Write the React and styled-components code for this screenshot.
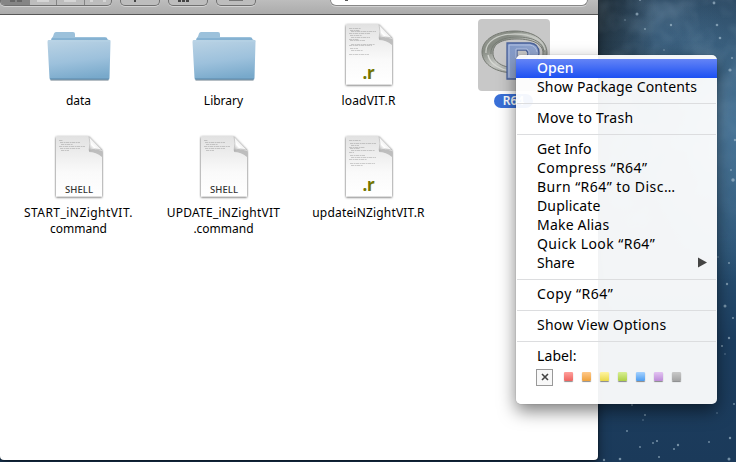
import React from "react";
import styled, { createGlobalStyle } from "styled-components";

const Global = createGlobalStyle`
  * { box-sizing: border-box; }
  html, body { margin: 0; width: 736px; height: 462px; overflow: hidden; }
  body { font-family: "Noto Sans", "Open Sans", sans-serif; color: #000; }
`;

const Desktop = styled.main`
  position: relative;
  width: 736px;
  height: 462px;
  overflow: hidden;
  background:
    radial-gradient(ellipse 60px 150px at 598px 0, rgba(32, 42, 48, 0.8), transparent),
    radial-gradient(ellipse 80px 150px at 725px 130px, rgba(84, 130, 166, 0.75), transparent),
    radial-gradient(ellipse 60px 50px at 665px 35px, rgba(68, 106, 138, 0.6), transparent),
    linear-gradient(#2a465f 0, #2f5878 120px, #2a5274 250px, #1c3e60 340px, #1b3a5a 462px);
`;

const Stars = styled.svg`
  position: absolute;
  inset: 0;
`;

const Window = styled.section`
  position: relative;
  width: 598px;
  height: 460px;
  background: #fff;
  border-radius: 0 0 4px 4px;
  box-shadow: 0 0 2px rgba(0, 0, 0, 0.8), 0 4px 12px rgba(0, 0, 0, 0.5);
`;

const Toolbar = styled.header`
  display: flex;
  align-items: flex-start;
  height: 15px;
  background: linear-gradient(#bdbdbd, #ababab);
  border-bottom: 1px solid #575757;
`;

const ViewSwitch = styled.div`
  display: flex;
  width: 112px;
  height: 6px;
  overflow: hidden;
  border: 1px solid #707070;
  border-top: 0;
  border-radius: 0 0 5px 5px;
  box-shadow: 0 1px 0 #d2d2d2;
  background: #bdbdbd;
`;

const ViewButton = styled.span`
  display: flex;
  justify-content: center;
  flex: ${(p) => (p.$active ? "0 0 29px" : "1")};
  background: ${(p) => (p.$active ? "#858585" : "transparent")};
  border-left: ${(p) => (p.$divided ? "1px solid #858585" : "0")};
`;

const ToolButton = styled.span`
  display: flex;
  justify-content: center;
  width: 40px;
  height: 6px;
  margin-left: 8px;
  border: 1px solid #707070;
  border-top: 0;
  border-radius: 0 0 5px 5px;
  box-shadow: 0 1px 0 #d2d2d2;
  background: #bdbdbd;
`;

const SearchField = styled.div`
  width: 258px;
  height: 6px;
  margin-left: 74px;
  padding-left: 14px;
  border: 1px solid #888;
  border-top: 0;
  border-radius: 0 0 9px 9px;
  box-shadow: 0 1px 0 #d2d2d2;
  background: #fff;
`;

const Glyph = styled.svg`
  display: block;
  flex: none;
`;

const Files = styled.div`
  display: grid;
  grid-template-columns: repeat(4, 145px);
  grid-auto-rows: 112px;
  padding: 4px 0 0 6px;
`;

const FileCell = styled.article`
  display: flex;
  flex-direction: column;
  align-items: center;
`;

const IconWell = styled.div`
  width: 72px;
  height: 72px;
  border-radius: 4px;
  background: ${(p) => (p.$selected ? "#c8c8c8" : "transparent")};
`;

const FileName = styled.div`
  display: flex;
  flex-direction: column;
  align-items: center;
  margin-top: ${(p) => (p.$selected ? 3 : 2)}px;
  padding: 0 9px;
  border-radius: 8px;
  font-size: 12px;
  line-height: ${(p) => (p.$selected ? 14 : 16)}px;
  font-weight: ${(p) => (p.$selected ? 600 : 400)};
  color: ${(p) => (p.$selected ? "#fff" : "#000")};
  background: ${(p) => (p.$selected ? "#3a70d8" : "transparent")};
`;

const NameLine = styled.span`
  letter-spacing: ${(p) => p.$track || 0}px;
  white-space: nowrap;
`;

const Menu = styled.nav`
  position: absolute;
  left: 516px;
  top: 55px;
  width: 201px;
  height: 349px;
  padding: 4px 0 0;
  border-radius: 5px;
  background: rgba(255, 255, 255, 0.945);
  box-shadow: 0 0 1px rgba(0, 0, 0, 0.45), 0 7px 17px rgba(0, 0, 0, 0.5);
`;

const MenuItem = styled.div`
  display: flex;
  align-items: center;
  justify-content: space-between;
  height: 19px;
  padding: 0 10px 2px 21px;
  font-size: 14px;
  line-height: 17px;
  white-space: nowrap;
  letter-spacing: ${(p) => p.$track || 0}px;
  color: ${(p) => (p.$active ? "#fff" : "#000")};
  font-weight: ${(p) => (p.$active ? 500 : 400)};
  background: ${(p) => (p.$active ? "linear-gradient(#6484f6, #1c50f2)" : "transparent")};
`;

const Separator = styled.hr`
  height: 1px;
  margin: 6px 1px 5px;
  border: 0;
  background: #dcdddf;
`;

const Swatches = styled.div`
  display: flex;
  align-items: center;
  height: 18px;
  margin-top: 2px;
  padding-left: 20px;
`;

const NoLabel = styled.span`
  display: grid;
  place-items: center;
  width: 17px;
  height: 17px;
  margin-right: 2px;
  border: 1px solid #999;
  background: #f8f8f8;
`;

const Swatch = styled.span`
  width: 9px;
  height: 9px;
  margin: -2px 0 0 9px;
  border-radius: 1px;
  background: linear-gradient(${(p) => p.$from}, ${(p) => p.$to});
  box-shadow: 0 1px 1px rgba(0, 0, 0, 0.45);
`;

function Folder() {
  return (
    <Glyph width="72" height="72" viewBox="0 0 72 72">
      <defs>
        <linearGradient id="folderFront" x1="0.2" y1="0" x2="0.4" y2="1">
          <stop offset="0" stopColor="#b9d2e4" />
          <stop offset="0.55" stopColor="#9dc1dc" />
          <stop offset="1" stopColor="#78a9cb" />
        </linearGradient>
      </defs>
      <path d="M8 24V20L10 17.500L11 14.500Q11.500 13 13 13H30Q32 13 32 15V18H62Q64 18 64.500 20L67 22V26H5V22Z" fill="#9cc1db" />
      <path d="M9 20H64" stroke="#6fa2c8" />
      <path d="M5.500 21H66.500Q68 21 67.500 23L66.500 59Q66.500 61 65 61H8Q6.500 61 6.500 59L4.500 23Q4.500 21 5.500 21Z" fill="url(#folderFront)" />
      <path d="M7 59.500H66" stroke="#6b9abc" />
      <path d="M7.500 61H65.500" stroke="#6d7f8c" strokeWidth="1" />
      <path d="M6 22H67" stroke="#b9d7e9" strokeWidth="0.600" />
    </Glyph>
  );
}

const CODE = [[0, 12], [2, 10], [3, 25], [5, 21], [7, 12], [9, 19], [11, 10], [12, 15], [16, 24], [17, 23], [20, 8], [22, 12], [26, 20]];
const SCRIPT = [[0, 4], [2, 20], [4, 12], [6, 26], [8, 20], [10, 8]];
const UPDATE = [[0, 12], [3, 26], [5, 8], [7, 16], [8, 10], [10, 24], [12, 5], [15, 15], [17, 25], [19, 18], [23, 25], [25, 12]];

function Page({ kind, lines }) {
  const shell = kind === "SHELL";
  return (
    <Glyph width="72" height="72" viewBox="0 0 72 72">
      <defs>
        <linearGradient id="paper" x1="0" y1="0" x2="0" y2="1">
          <stop offset="0" stopColor="#e2e2e2" />
          <stop offset="0.600" stopColor="#fafafa" />
          <stop offset="1" stopColor="#fff" />
        </linearGradient>
        <linearGradient id="curl" x1="0" y1="1" x2="0.700" y2="0.300">
          <stop offset="0" stopColor="#a8a8a8" />
          <stop offset="0.450" stopColor="#fff" />
          <stop offset="1" stopColor="#e0e0e0" />
        </linearGradient>
        <filter id="drop" x="-20%" y="-20%" width="140%" height="140%">
          <feDropShadow dx="0" dy="0.700" stdDeviation="0.900" floodOpacity="0.75" />
        </filter>
      </defs>
      <path d="M13 5.500H46L59 19V65.500H13Z" fill="url(#paper)" filter="url(#drop)" />
      <path d="M46 19Q52 17 59 20V26Q53 21 46 21Z" fill="#aaa" opacity="0.700" />
      <path d="M46 5.500L59 19Q52 16.500 46 19.500Q48 12 46 5.500Z" fill="url(#curl)" stroke="#aaa" strokeWidth="0.500" />
      {lines.map(([y, w], i) => (
        <path key={i} d={`M${16 + (i % 3)} ${9.5 + y}h${w}`} stroke="#777" strokeWidth="0.600" strokeDasharray="3 .6 2 .4" opacity="0.550" />
      ))}
      {shell ? (
        <text x="36" y="62" textAnchor="middle" fontFamily="Noto Sans" fontSize="9.500" fontWeight="500" textLength="28" fill="#333">SHELL</text>
      ) : (
        <text x="35.500" y="60" textAnchor="middle" fontFamily="Noto Sans" fontSize="17" fontWeight="700" textLength="12" fill="#737500">.r</text>
      )}
    </Glyph>
  );
}

function RLogo() {
  return (
    <Glyph width="72" height="72" viewBox="0 0 72 72">
      <defs>
        <linearGradient id="ring" x1="0" y1="0" x2="1" y2="1">
          <stop offset="0" stopColor="#a4a69f" />
          <stop offset="0.250" stopColor="#858a82" />
          <stop offset="0.500" stopColor="#c5c7c3" />
          <stop offset="1" stopColor="#6c716b" />
        </linearGradient>
        <linearGradient id="letter" x1="0" y1="0" x2="1" y2="1">
          <stop offset="0" stopColor="#7e96c6" />
          <stop offset="1" stopColor="#a5b6da" />
        </linearGradient>
      </defs>
      <path fillRule="evenodd" d="M4 33C4 20 19 12 37 12S69 21 69 34S55 54 37 54S4 46 4 33ZM15 34C15 43 25 49 39 49S65 43 65 34S55 20 39 20S15 25 15 34Z" fill="url(#ring)" stroke="#757972" />
      <path d="M8 34C7 22 20 15 37 15S65 21 67 31" fill="none" stroke="#c9ccc6" strokeWidth="1.300" />
      <path d="M13 35C12 25 23 18 39 18S65 23 66 33" fill="none" stroke="#777c75" strokeWidth="1" />
      <path d="M10 36C12 45 22 51 34 52" fill="none" stroke="#d5d7d2" strokeWidth="1.300" />
      <path fillRule="evenodd" d="M29 24H52Q61 25 61 34Q61 41 54 43L63 60H52L44 45H39V60H29ZM39 31V38H48Q52 35 48 31Z" fill="url(#letter)" stroke="#4a629a" strokeWidth="1.300" />
      <path d="M31 58V26H52Q58 27 59 33M38 39V30H49Q52 32 51 37" fill="none" stroke="#b4c3e4" strokeWidth="1" />
    </Glyph>
  );
}

const FILES = [
  { icon: <Folder />, name: [["data"]] },
  { icon: <Folder />, name: [["Library"]] },
  { icon: <Page kind=".r" lines={CODE} />, name: [["loadVIT.R", 0.2]] },
  { icon: <RLogo />, name: [["R64"]], selected: true },
  { icon: <Page kind="SHELL" lines={SCRIPT} />, name: [["START_iNZightVIT.", 0.45], ["command"]] },
  { icon: <Page kind="SHELL" lines={SCRIPT} />, name: [["UPDATE_iNZightVIT", 0.25], [".command"]] },
  { icon: <Page kind=".r" lines={UPDATE} />, name: [["updateiNZightVIT.R", 0.18]] },
];

const MENU = [
  ["Open"], ["Show Package Contents", 0.15], null,
  ["Move to Trash", 0.3], null,
  ["Get Info", 0.15], ["Compress “R64”", 0.44], ["Burn “R64” to Disc…", 0.46], ["Duplicate", 0.15], ["Make Alias", 0.2], ["Quick Look “R64”", 0.44], ["Share"], null,
  ["Copy “R64”", 0.52], null,
  ["Show View Options", 0.23], null,
  ["Label:", 0.1],
];

const LABELS = [["#ffa09c", "#ee6460"], ["#ffc98a", "#efa13c"], ["#fff4a0", "#ead94a"], ["#d8ef94", "#aed045"], ["#a6d2ff", "#4e9df0"], ["#e3c3f2", "#bd8bd8"], ["#c9c9c9", "#a3a3a3"]];

const STARS = [
  [637, 14, 1.5], [640, 0, 1], [671, 25, 1.2], [714, 3, 1.4], [717, 25, 1.3], [720, 38, 1.3], [730, 70, 1.6], [732, 58, 1], [645, 29, 0.9], [625, 20, 0.7], [664, 50, 0.8],
  [735, 140, 1.2], [731, 170, 0.9], [733, 180, 1.7], [718, 257, 0.8], [729, 263, 1], [727, 284, 1.2], [725, 306, 1.5], [733, 318, 1],
  [729, 338, 1.2], [722, 346, 1], [725, 354, 0.7], [604, 460, 1.2], [620, 459, 1.3], [627, 431, 0.9], [632, 405, 0.9], [645, 415, 0.9], [643, 420, 0.7], [653, 443, 0.9], [657, 441, 1.1], [678, 445, 1.2], [674, 449, 1], [640, 447, 0.9], [659, 457, 1], [709, 442, 0.9], [730, 438, 1.2], [729, 459, 1.5], [717, 413, 0.7], [734, 404, 0.9],
];

export default function App() {
  return (
    <Desktop>
      <Global />
      <Stars width="736" height="462">
        <defs>
          <filter id="clouds" x="0" y="0" width="100%" height="100%">
            <feTurbulence type="fractalNoise" baseFrequency="0.03" numOctaves="3" seed="8" />
            <feColorMatrix values="0 0 0 0 .45  0 0 0 0 .62  0 0 0 0 .76  1.4 0 0 0 -.55" />
          </filter>
          <linearGradient id="cloudFade" x1="0" y1="0" x2="0" y2="1">
            <stop offset="0" stopColor="#fff" />
            <stop offset="0.450" stopColor="#aaa" />
            <stop offset="1" stopColor="#000" />
          </linearGradient>
          <mask id="cloudMask">
            <rect x="598" width="138" height="260" fill="url(#cloudFade)" />
          </mask>
        </defs>
        <g mask="url(#cloudMask)">
          <rect x="598" width="138" height="260" filter="url(#clouds)" opacity="0.350" />
        </g>
        {STARS.map(([x, y, r], i) => <circle key={i} cx={x} cy={y} r={r} fill="#b3cad9" opacity="0.600" />)}
      </Stars>
      <Window>
        <Toolbar>
          <ViewSwitch>
            <ViewButton $active><Glyph width="14" height="4"><path d="M1 0h5v2H1zM8 0h5v2H8z" fill="#666" /></Glyph></ViewButton>
            <ViewButton><Glyph width="14" height="4"><path d="M1 1h12" stroke="#eee" /></Glyph></ViewButton>
            <ViewButton $divided><Glyph width="14" height="4"><path d="M1 1h12" stroke="#eee" /></Glyph></ViewButton>
            <ViewButton $divided><Glyph width="18" height="4"><path d="M1 1h3M14 1h3" stroke="#eee" /></Glyph></ViewButton>
          </ViewSwitch>
          <ToolButton><Glyph width="22" height="3"><path d="M5 0h2v2H5z" fill="#444" /></Glyph></ToolButton>
          <ToolButton><Glyph width="20" height="3"><path d="M0 0h3v2H0zM4 0h3v2H4zM8 0h3v2H8z" fill="#444" /></Glyph></ToolButton>
          <ToolButton><Glyph width="14" height="3"><path d="M0 0.500h14" stroke="#777" /></Glyph></ToolButton>
          <SearchField><Glyph width="4" height="2"><path d="M0 0h3v1H0z" fill="#555" /></Glyph></SearchField>
        </Toolbar>
        <Files>
          {FILES.map((file, i) => (
            <FileCell key={i}>
              <IconWell $selected={file.selected}>{file.icon}</IconWell>
              <FileName $selected={file.selected}>
                {file.name.map(([line, track]) => <NameLine key={line} $track={track}>{line}</NameLine>)}
              </FileName>
            </FileCell>
          ))}
        </Files>
      </Window>
      <Menu>
        {MENU.map((item, i) => item === null ? <Separator key={i} /> : (
          <MenuItem key={i} $active={i === 0} $track={item[1]}>
            {item[0]}
            {item[0] === "Share" && <Glyph width="9" height="11"><path d="M0 .5L9 5.500L0 10.500Z" fill="#444" /></Glyph>}
          </MenuItem>
        ))}
        <Swatches>
          <NoLabel><Glyph width="8" height="8"><path d="M1 1L7 7M7 1L1 7" stroke="#444" strokeWidth="1.600" /></Glyph></NoLabel>
          {LABELS.map(([from, to]) => <Swatch key={from} $from={from} $to={to} />)}
        </Swatches>
      </Menu>
    </Desktop>
  );
}
